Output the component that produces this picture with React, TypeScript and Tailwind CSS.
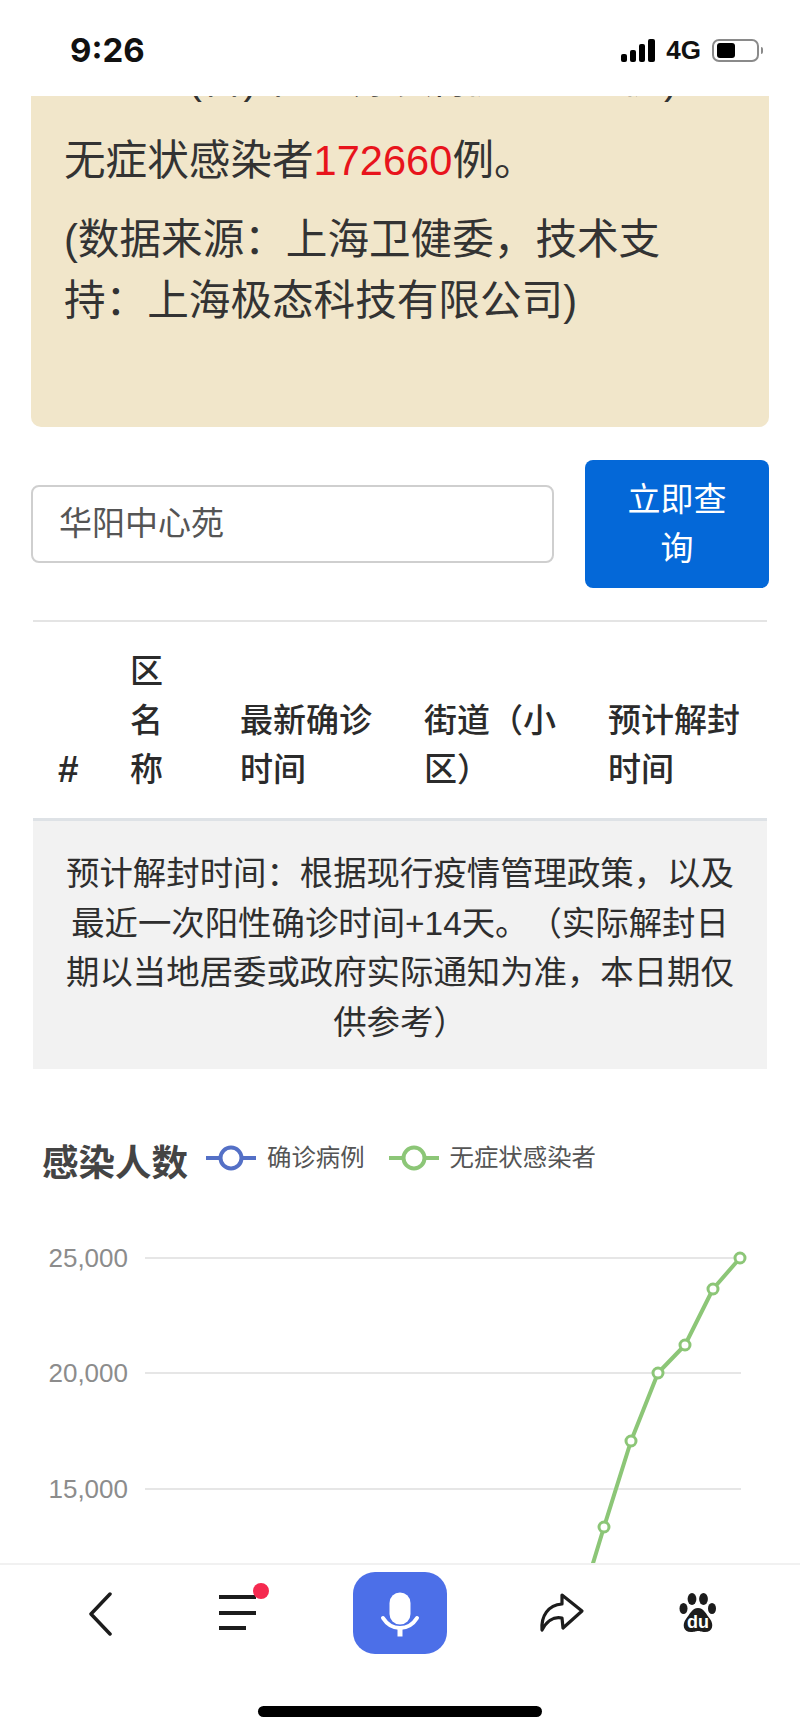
const cjk = "font-['Liberation_Sans','Noto_Sans_CJK_SC',sans-serif] [text-spacing-trim:space-all]";

const GREEN = "#8cc677";
const points: [number, number][] = [
  [740, 75],
  [713, 106],
  [685, 162],
  [658, 190],
  [631, 258],
  [604, 344],
  [577, 433],
];

function StatusBar() {
  return (
    <div className="flex h-[96px] items-start justify-between bg-white pl-[70px] pr-[37px] pt-[32px]">
      <span className="font-['Inter',sans-serif] text-[33px] leading-[36px] font-bold text-[#111]">9:26</span>
      <div className="mt-[7px] flex items-center gap-[11px]">
        <div className="flex h-[23px] items-end gap-[3px]">
          <i className="h-[8px] w-[6px] rounded-[2px] bg-black" />
          <i className="h-[12px] w-[6px] rounded-[2px] bg-black" />
          <i className="h-[18px] w-[6px] rounded-[2px] bg-black" />
          <i className="h-[23px] w-[7px] rounded-[2px] bg-black" />
        </div>
        <span className="font-['Liberation_Sans',sans-serif] text-[26px] leading-[23px] font-bold text-[#111]">4G</span>
        <div className="flex items-center gap-[2px]">
          <div className="flex h-[23px] w-[47px] items-center rounded-[7px] border-2 border-[#8a8a8a] pl-[3px]">
            <div className="h-[15px] w-[18px] rounded-[3px] bg-black" />
          </div>
          <div className="h-[7px] w-[2px] rounded-r-full bg-[#8a8a8a]" />
        </div>
      </div>
    </div>
  );
}

function NoticeCard() {
  return (
    <div className="mx-[31px] h-[331px] overflow-hidden rounded-b-[10px] bg-[#f1e6ca] px-[33px] text-[41.6px] leading-[61px] text-[#333]">
      <p className="-mt-[48px] whitespace-nowrap pl-[124px]">(含)本土确诊病例15026例)</p>
      <p className="mt-[21px]">
        无症状感染者<span className="text-[#e8141c]">172660</span>例。
      </p>
      <p className="mt-[18px]">(数据来源：上海卫健委，技术支持：上海极态科技有限公司)</p>
    </div>
  );
}

function SearchRow() {
  return (
    <div className="mx-[31px] mt-[33px] flex items-center justify-between">
      <div className="flex h-[78px] w-[523px] items-center rounded-[8px] border-2 border-[#cfcfcf] pl-[26px] text-[33px] text-[#555]">
        华阳中心苑
      </div>
      <button className="h-[128px] w-[184px] rounded-[8px] bg-[#0468d8] px-[30px] text-[33px] leading-[49px] text-white">
        立即查询
      </button>
    </div>
  );
}

function ResultTable() {
  const heads = ["#", "区名称", "最新确诊时间", "街道（小区）", "预计解封时间"];
  return (
    <div className="mx-[33px] mt-[32px] border-t-2 border-[#e4e4e4]">
      <div className="grid grid-cols-[71px_110px_184px_184px_185px] items-end border-b-[3px] border-[#dee2e6] pt-[25px] pb-[24px] text-[33px] leading-[49px] font-medium text-[#2b2b2b]">
        {heads.map((h) => (
          <div key={h} className={h === "#" ? "pl-[25px] text-[37px] font-bold" : "pl-[26px] pr-[26px]"}>
            {h}
          </div>
        ))}
      </div>
      <div className="bg-[#f2f2f2] px-[30px] pt-[28px] pb-[22px] text-center text-[33.4px] leading-[49.5px] text-[#2e2e2e]">
        预计解封时间：根据现行疫情管理政策，以及最近一次阳性确诊时间+14天。（实际解封日期以当地居委或政府实际通知为准，本日期仅供参考）
      </div>
    </div>
  );
}

function LegendItem({ color, label }: { color: string; label: string }) {
  return (
    <div className="flex items-center gap-[11px]">
      <svg width="50" height="28" viewBox="0 0 50 28">
        <line x1="0" y1="14" x2="50" y2="14" stroke={color} strokeWidth="4" />
        <circle cx="25" cy="14" r="10.5" fill="#fff" stroke={color} strokeWidth="4" />
      </svg>
      <span className="text-[24.4px] leading-[30px] text-[#555]">{label}</span>
    </div>
  );
}

function InfectionChart() {
  const ticks = [
    { y: 75, label: "25,000" },
    { y: 190, label: "20,000" },
    { y: 306, label: "15,000" },
    { y: 422, label: "10,000" },
  ];
  return (
    <div className="mt-[70px]">
      <div className="flex h-[44px] items-start gap-[18px] pl-[42px]">
        <h2 className="pt-[3px] text-[36.5px] leading-[44px] font-bold text-[#444]">感染人数</h2>
        <div className="mt-[4px] flex items-center gap-[24px]">
          <LegendItem color="#5470c6" label="确诊病例" />
          <LegendItem color={GREEN} label="无症状感染者" />
        </div>
      </div>
      <svg className="block" width="800" height="480" viewBox="0 0 800 480">
        {ticks.map((t) => (
          <g key={t.y}>
            <line x1="145" x2="741" y1={t.y} y2={t.y} stroke="#e6e6e6" strokeWidth="2" />
            <text
              x="128"
              y={t.y + 9}
              textAnchor="end"
              fontSize="26"
              fill="#8c8c8c"
              fontFamily="'Liberation Sans', sans-serif"
            >
              {t.label}
            </text>
          </g>
        ))}
        <polyline
          points={points.map((p) => p.join(",")).join(" ")}
          fill="none"
          stroke={GREEN}
          strokeWidth="4"
          strokeLinejoin="round"
        />
        {points.map(([x, y]) => (
          <circle key={x} cx={x} cy={y} r="5" fill="#fff" stroke={GREEN} strokeWidth="3" />
        ))}
      </svg>
    </div>
  );
}

function BottomBar() {
  return (
    <div className="h-[169px] shrink-0 border-t-2 border-[#f1f1f1] bg-white">
      <div className="flex h-[91px] items-start pl-[88px] pt-[7px]">
        <svg className="mt-[20px]" width="24" height="44" viewBox="0 0 24 44" fill="none">
          <path d="M22 2 L3 22 L22 42" stroke="#1c1c1c" strokeWidth="3.5" strokeLinecap="round" strokeLinejoin="round" />
        </svg>
        <div className="relative ml-[107px] mt-[23px] flex h-[35px] w-[38px] flex-col justify-between">
          <i className="h-[4px] w-[37px] bg-[#1c1c1c]" />
          <i className="h-[4px] w-[37px] bg-[#1c1c1c]" />
          <i className="h-[4px] w-[27px] bg-[#1c1c1c]" />
          <i className="absolute -top-[12px] left-[34px] h-[16px] w-[16px] rounded-full bg-[#f5294f]" />
        </div>
        <div className="ml-[96px] flex h-[82px] w-[94px] items-center justify-center rounded-[22px] bg-[#4c6fe8]">
          <svg width="40" height="48" viewBox="0 0 40 48" fill="none">
            <rect x="9.5" y="3.5" width="21" height="32" rx="10.5" fill="#fff" />
            <path d="M3 29 C8 37 14 39 20 39 C26 39 32 37 37 29" stroke="#fff" strokeWidth="4" strokeLinecap="round" />
            <path d="M20 39 V47.5" stroke="#fff" strokeWidth="5" />
          </svg>
        </div>
        <svg className="ml-[92px] mt-[20px]" width="46" height="42" viewBox="0 0 46 42" fill="none">
          <path
            d="M23 3 L43 19 L24 36 L23 26 C14 24 7 30 3 38 C2 24 9 13 23 12 Z"
            stroke="#1c1c1c"
            strokeWidth="3.2"
            strokeLinejoin="round"
          />
        </svg>
        <svg className="ml-[94px] mt-[21px]" width="38" height="42" viewBox="0 0 38 42">
          <ellipse cx="4.5" cy="15.5" rx="4" ry="5.5" fill="#1c1c1c" />
          <ellipse cx="13" cy="6" rx="4.4" ry="6" fill="#1c1c1c" />
          <ellipse cx="24.5" cy="6" rx="4.4" ry="6" fill="#1c1c1c" />
          <ellipse cx="33" cy="15.5" rx="4" ry="5.5" fill="#1c1c1c" />
          <path d="M19 15 C25 15 27 21 31 26 C35 31 34 39 26 39 C22 39 21 38 19 38 C17 38 16 39 12 39 C4 39 3 31 7 26 C11 21 13 15 19 15 Z" fill="#1c1c1c" />
          <text x="19" y="35" textAnchor="middle" fontSize="18" fontWeight="700" fill="#fff" fontFamily="'Liberation Sans', sans-serif">
            du
          </text>
        </svg>
      </div>
      <div className="mx-auto mt-[50px] h-[11px] w-[284px] rounded-full bg-black" />
    </div>
  );
}

export default function App() {
  return (
    <div className={`flex h-[1732px] w-[800px] flex-col overflow-hidden bg-white ${cjk}`}>
      <StatusBar />
      <main className="min-h-0 flex-1 overflow-hidden">
        <NoticeCard />
        <SearchRow />
        <ResultTable />
        <InfectionChart />
      </main>
      <BottomBar />
    </div>
  );
}
